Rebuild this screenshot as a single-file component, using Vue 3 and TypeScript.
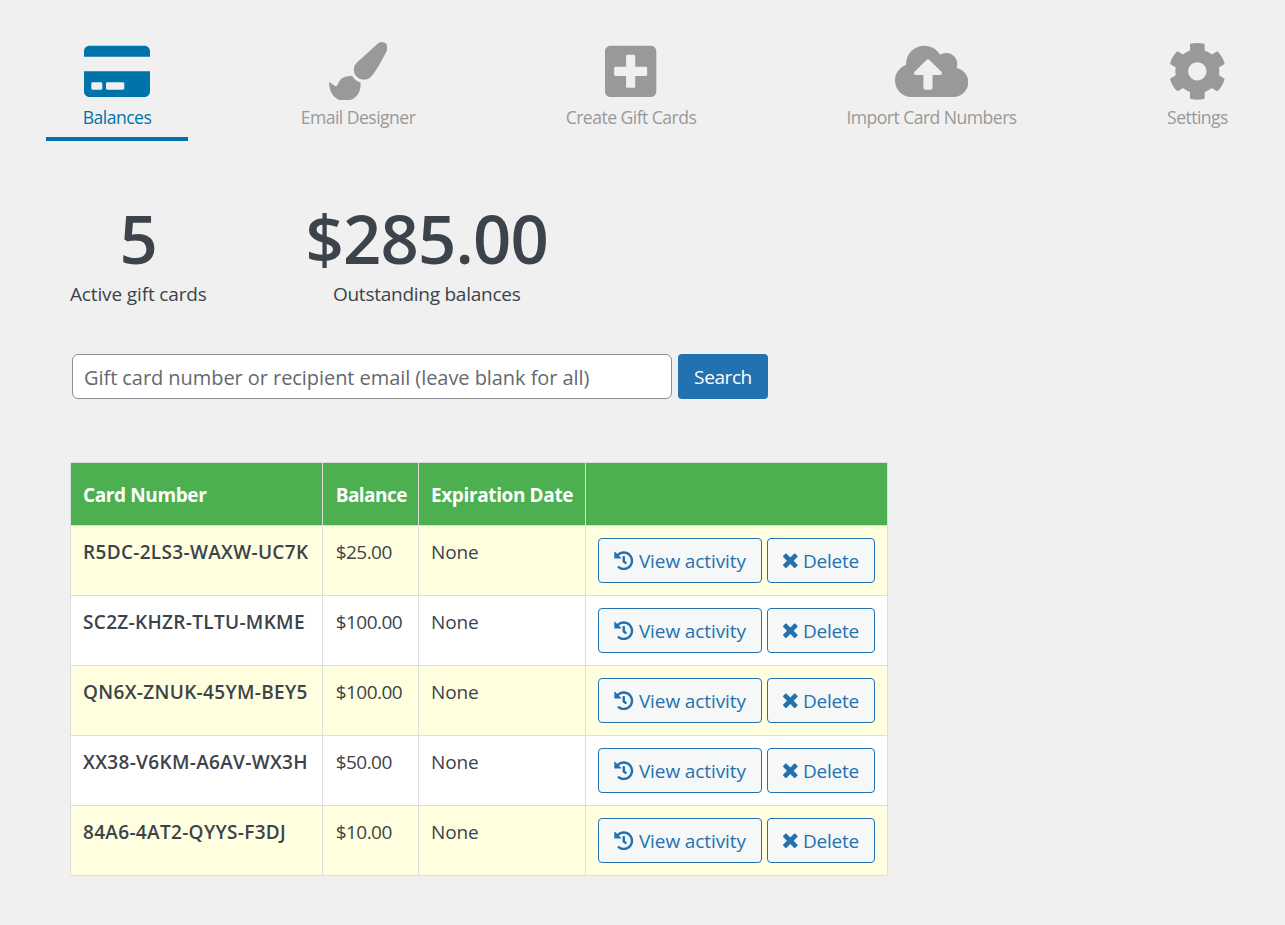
<script setup lang="ts">
import { ref } from 'vue'

interface Tab {
  label: string
  box: string
  path: string
}

interface GiftCard {
  number: string
  balance: string
  expires: string
}

const active = ref('Balances')
const query = ref('')

const tabs: Tab[] = [
  {
    label: 'Balances',
    box: '0 0 576 512',
    path: 'M0 432c0 26.5 21.5 48 48 48h480c26.5 0 48-21.5 48-48V256H0v176zm192-68c0-6.6 5.4-12 12-12h136c6.6 0 12 5.4 12 12v40c0 6.6-5.4 12-12 12H204c-6.6 0-12-5.4-12-12v-40zm-128 0c0-6.6 5.4-12 12-12h72c6.6 0 12 5.4 12 12v40c0 6.6-5.4 12-12 12H76c-6.6 0-12-5.4-12-12v-40zM576 80v48H0V80c0-26.5 21.5-48 48-48h480c26.5 0 48 21.5 48 48z',
  },
  {
    label: 'Email Designer',
    box: '0 0 1792 1792',
    path: 'M1615 0q70 0 122.500 46.500t52.500 116.500q0 63-45 151-332 629-465 752-97 91-218 91-126 0-216.500-92.500t-90.500-219.500q0-128 92-212l638-579q59-54 130-54zm-909 1034q39 76 106.500 130t150.500 76l1 71q4 213-129.500 347t-348.500 134q-123 0-218-46.500t-152.500-127.500-86.500-183-29-220q7 5 41 30t62 44.500 59 36.500 46 17q41 0 55-37 25-66 57.500-112.500t69.500-76 88-47.500 103-25.500 125-10.500z',
  },
  {
    label: 'Create Gift Cards',
    box: '0 0 448 512',
    path: 'M400 32H48C21.5 32 0 53.5 0 80v352c0 26.5 21.5 48 48 48h352c26.5 0 48-21.5 48-48V80c0-26.5-21.5-48-48-48zm-32 252c0 6.6-5.4 12-12 12h-92v92c0 6.6-5.4 12-12 12h-56c-6.6 0-12-5.4-12-12v-92H92c-6.6 0-12-5.4-12-12v-56c0-6.6 5.4-12 12-12h92v-92c0-6.6 5.4-12 12-12h56c6.6 0 12 5.4 12 12v92h92c6.6 0 12 5.4 12 12v56z',
  },
  {
    label: 'Import Card Numbers',
    box: '0 0 640 512',
    path: 'M537.6 226.6c4.1-10.7 6.4-22.4 6.4-34.6 0-53-43-96-96-96-19.7 0-38.1 6-53.3 16.2C367 64.2 315.3 32 256 32c-88.4 0-160 71.6-160 160 0 2.7.1 5.4.2 8.1C40.2 219.8 0 273.2 0 336c0 79.5 64.5 144 144 144h368c70.7 0 128-57.3 128-128 0-61.9-44-113.6-102.4-125.4zM393.4 288H328v112c0 8.8-7.2 16-16 16h-48c-8.8 0-16-7.2-16-16V288h-65.4c-14.3 0-21.4-17.2-11.3-27.3l105.4-105.4c6.2-6.2 16.4-6.2 22.6 0l105.4 105.4c10.1 10.1 2.9 27.3-11.3 27.3z',
  },
  {
    label: 'Settings',
    box: '0 0 512 512',
    path: 'M487.4 315.7l-42.6-24.6c4.3-23.2 4.3-47 0-70.2l42.6-24.6c4.9-2.8 7.1-8.6 5.5-14-11.1-35.6-30-67.8-54.7-94.6-3.8-4.1-10-5.1-14.8-2.3L380.8 110c-17.9-15.4-38.5-27.3-60.8-35.1V25.8c0-5.6-3.9-10.5-9.4-11.7-36.7-8.2-74.3-7.8-109.2 0-5.5 1.2-9.4 6.1-9.4 11.7V75c-22.2 7.9-42.8 19.8-60.8 35.1L88.7 85.5c-4.9-2.8-11-1.9-14.8 2.3-24.7 26.7-43.6 58.9-54.7 94.6-1.7 5.4.6 11.2 5.5 14L67.3 221c-4.3 23.2-4.3 47 0 70.2l-42.6 24.6c-4.9 2.8-7.1 8.6-5.5 14 11.1 35.6 30 67.8 54.7 94.6 3.8 4.1 10 5.1 14.8 2.3l42.6-24.6c17.9 15.4 38.5 27.3 60.8 35.1v49.2c0 5.6 3.9 10.5 9.4 11.7 36.7 8.2 74.3 7.8 109.2 0 5.5-1.2 9.4-6.1 9.4-11.7v-49.2c22.2-7.9 42.8-19.8 60.8-35.1l42.6 24.6c4.9 2.8 11 1.9 14.8-2.3 24.7-26.7 43.6-58.9 54.7-94.6 1.5-5.5-.7-11.3-5.6-14.1zM256 336c-44.1 0-80-35.9-80-80s35.9-80 80-80 80 35.9 80 80-35.9 80-80 80z',
  },
]

const cards: GiftCard[] = [
  { number: 'R5DC-2LS3-WAXW-UC7K', balance: '$25.00', expires: 'None' },
  { number: 'SC2Z-KHZR-TLTU-MKME', balance: '$100.00', expires: 'None' },
  { number: 'QN6X-ZNUK-45YM-BEY5', balance: '$100.00', expires: 'None' },
  { number: 'XX38-V6KM-A6AV-WX3H', balance: '$50.00', expires: 'None' },
  { number: '84A6-4AT2-QYYS-F3DJ', balance: '$10.00', expires: 'None' },
]
</script>

<template>
  <div class="page">
    <nav class="tabs">
      <a
        v-for="tab in tabs"
        :key="tab.label"
        class="tab"
        :class="{ active: tab.label === active }"
        @click="active = tab.label"
      >
        <svg class="tab-icon" :viewBox="tab.box"><path :d="tab.path" /></svg>
        <span class="tab-label">{{ tab.label }}</span>
      </a>
    </nav>

    <section class="stats">
      <div class="stat">
        <strong class="stat-value">5</strong>
        <span class="stat-label">Active gift cards</span>
      </div>
      <div class="stat">
        <strong class="stat-value">$285.00</strong>
        <span class="stat-label">Outstanding balances</span>
      </div>
    </section>

    <form class="search" @submit.prevent>
      <input
        v-model="query"
        class="search-input"
        type="text"
        placeholder="Gift card number or recipient email (leave blank for all)"
      />
      <button class="search-button" type="submit">Search</button>
    </form>

    <table class="cards">
      <colgroup>
        <col class="col-number" />
        <col class="col-balance" />
        <col class="col-expires" />
        <col class="col-actions" />
      </colgroup>
      <thead>
        <tr>
          <th>Card Number</th>
          <th class="balance">Balance</th>
          <th>Expiration Date</th>
          <th></th>
        </tr>
      </thead>
      <tbody>
        <tr v-for="card in cards" :key="card.number">
          <td class="number">{{ card.number }}</td>
          <td class="balance">{{ card.balance }}</td>
          <td>{{ card.expires }}</td>
          <td>
            <div class="actions">
              <button class="action view" type="button">
                <svg class="action-icon" viewBox="0 0 512 512">
                  <path
                    d="M504 255.531c.253 136.64-111.18 248.372-247.82 248.468-59.015.042-113.223-20.53-155.822-54.911-11.077-8.94-11.905-25.541-1.839-35.607l11.267-11.267c8.609-8.609 22.353-9.551 31.891-1.984C173.062 425.135 212.781 440 256 440c101.705 0 184-82.311 184-184 0-101.705-82.311-184-184-184-48.814 0-93.149 18.969-126.068 49.932l50.754 50.754c10.08 10.08 2.941 27.314-11.313 27.314H24c-8.837 0-16-7.163-16-16V38.627c0-14.254 17.234-21.393 27.314-11.314l49.372 49.372C129.209 34.136 189.552 8 256 8c136.81 0 247.747 110.78 248 247.531zm-180.912 78.784l9.823-12.63c8.138-10.463 6.253-25.542-4.21-33.679L288 256.349V152c0-13.255-10.745-24-24-24h-16c-13.255 0-24 10.745-24 24v135.651l65.409 50.874c10.463 8.137 25.541 6.253 33.679-4.21z"
                  />
                </svg>
                <span>View activity</span>
              </button>
              <button class="action delete" type="button">
                <svg class="action-icon" viewBox="0 0 384 512">
                  <path
                    d="M323.1 441l53.9-53.9c9.4-9.4 9.4-24.5 0-33.9L279.8 256l97.2-97.2c9.4-9.4 9.4-24.5 0-33.9L323.1 71c-9.4-9.4-24.5-9.4-33.9 0L192 168.2 94.8 71c-9.4-9.4-24.5-9.4-33.9 0L7 124.9c-9.4 9.4-9.4 24.5 0 33.9l97.2 97.2L7 353.2c-9.4 9.4-9.4 24.5 0 33.9L60.9 441c9.4 9.4 24.5 9.4 33.9 0l97.2-97.2 97.2 97.2c9.3 9.3 24.5 9.3 33.9 0z"
                  />
                </svg>
                <span>Delete</span>
              </button>
            </div>
          </td>
        </tr>
      </tbody>
    </table>
  </div>
</template>

<style>
body {
  background: #f0f0f0;
}
</style>

<style scoped>
.page {
  box-sizing: border-box;
  width: 1285px;
  height: 925px;
  padding: 41px 0 0 46px;
  overflow: hidden;
  background: #f0f0f0;
  color: #3c434a;
  font-family: 'Segoe UI', 'Open Sans', 'Noto Sans', sans-serif;
  font-size: 19px;
  line-height: 28px;
}

.tabs {
  display: grid;
  grid-template-columns: 142px 190px 206px 245px 137px;
  column-gap: 75px;
  height: 100px;
}

.tab {
  box-sizing: border-box;
  display: flex;
  flex-direction: column;
  align-items: center;
  height: 100px;
  border-bottom: 4px solid transparent;
  color: #999;
  cursor: pointer;
}

.tab.active {
  border-bottom-color: #0073aa;
  color: #0073aa;
}

.tab-icon {
  height: 58.67px;
  margin-top: 0.7px;
  fill: currentColor;
}

.tab-label {
  margin-top: 4px;
  font-size: 17.6px;
  line-height: 26px;
  letter-spacing: -0.54px;
  white-space: nowrap;
}

.stats {
  display: flex;
  gap: 97px;
  margin: 59px 0 0 24px;
}

.stat {
  display: flex;
  flex-direction: column;
  align-items: center;
}

.stat:last-child {
  width: 246px;
}

.stat-value {
  font-size: 67px;
  font-weight: 600;
  line-height: 76px;
  letter-spacing: -0.8px;
}

.stat-label {
  margin-top: 4px;
  padding: 4px 0;
  letter-spacing: -0.14px;
  line-height: 20px;
  white-space: nowrap;
}

.stat:last-child .stat-label {
  letter-spacing: -0.25px;
}

.search {
  display: flex;
  gap: 6px;
  margin: 46px 0 0 26px;
}

.search-input {
  box-sizing: border-box;
  width: 600px;
  height: 45px;
  padding: 1px 11px 0;
  border: 1px solid #8c8f94;
  border-radius: 6px;
  outline: none;
  background: #fff;
  color: #2c3338;
  font: inherit;
  font-size: 20px;
  letter-spacing: -0.06px;
}

.search-input::placeholder {
  color: #646970;
  opacity: 1;
}

.search-button {
  width: 90px;
  height: 45px;
  padding: 0;
  border: 0;
  border-radius: 4px;
  background: #2271b1;
  color: #fff;
  font: inherit;
  letter-spacing: -0.4px;
}

.cards {
  width: 818px;
  margin: 63px 0 0 24px;
  border-collapse: collapse;
  table-layout: fixed;
}

.col-number {
  width: 252px;
}

.col-balance {
  width: 96px;
}

.col-expires {
  width: 167px;
}

.col-actions {
  width: 302px;
}

th,
td {
  box-sizing: border-box;
  padding: 12px;
  border: 1px solid #ddd;
  text-align: left;
  vertical-align: top;
  white-space: nowrap;
}

th {
  height: 63px;
  padding-top: 18px;
  background: #4caf50;
  color: #fff;
  font-weight: 700;
  letter-spacing: -0.38px;
}

td {
  height: 70px;
  background: #fff;
  letter-spacing: -0.15px;
}

tbody tr:nth-child(odd) td {
  background: #ffffe0;
}

.number {
  font-weight: 600;
  letter-spacing: 0.32px;
}

.balance {
  padding-left: 12.7px;
  letter-spacing: -0.55px;
}

.actions {
  display: flex;
  gap: 5px;
}

.action {
  box-sizing: border-box;
  display: flex;
  align-items: center;
  height: 45px;
  padding: 0 0 0 15px;
  border: 1px solid #2271b1;
  border-radius: 4px;
  background: #f6f7f7;
  color: #2271b1;
  font: inherit;
  letter-spacing: -0.1px;
}

.view {
  width: 164px;
}

.delete {
  width: 108px;
  letter-spacing: -0.25px;
}

.action-icon {
  flex: none;
  height: 19.5px;
  margin-right: 5.4px;
  fill: currentColor;
}
</style>
